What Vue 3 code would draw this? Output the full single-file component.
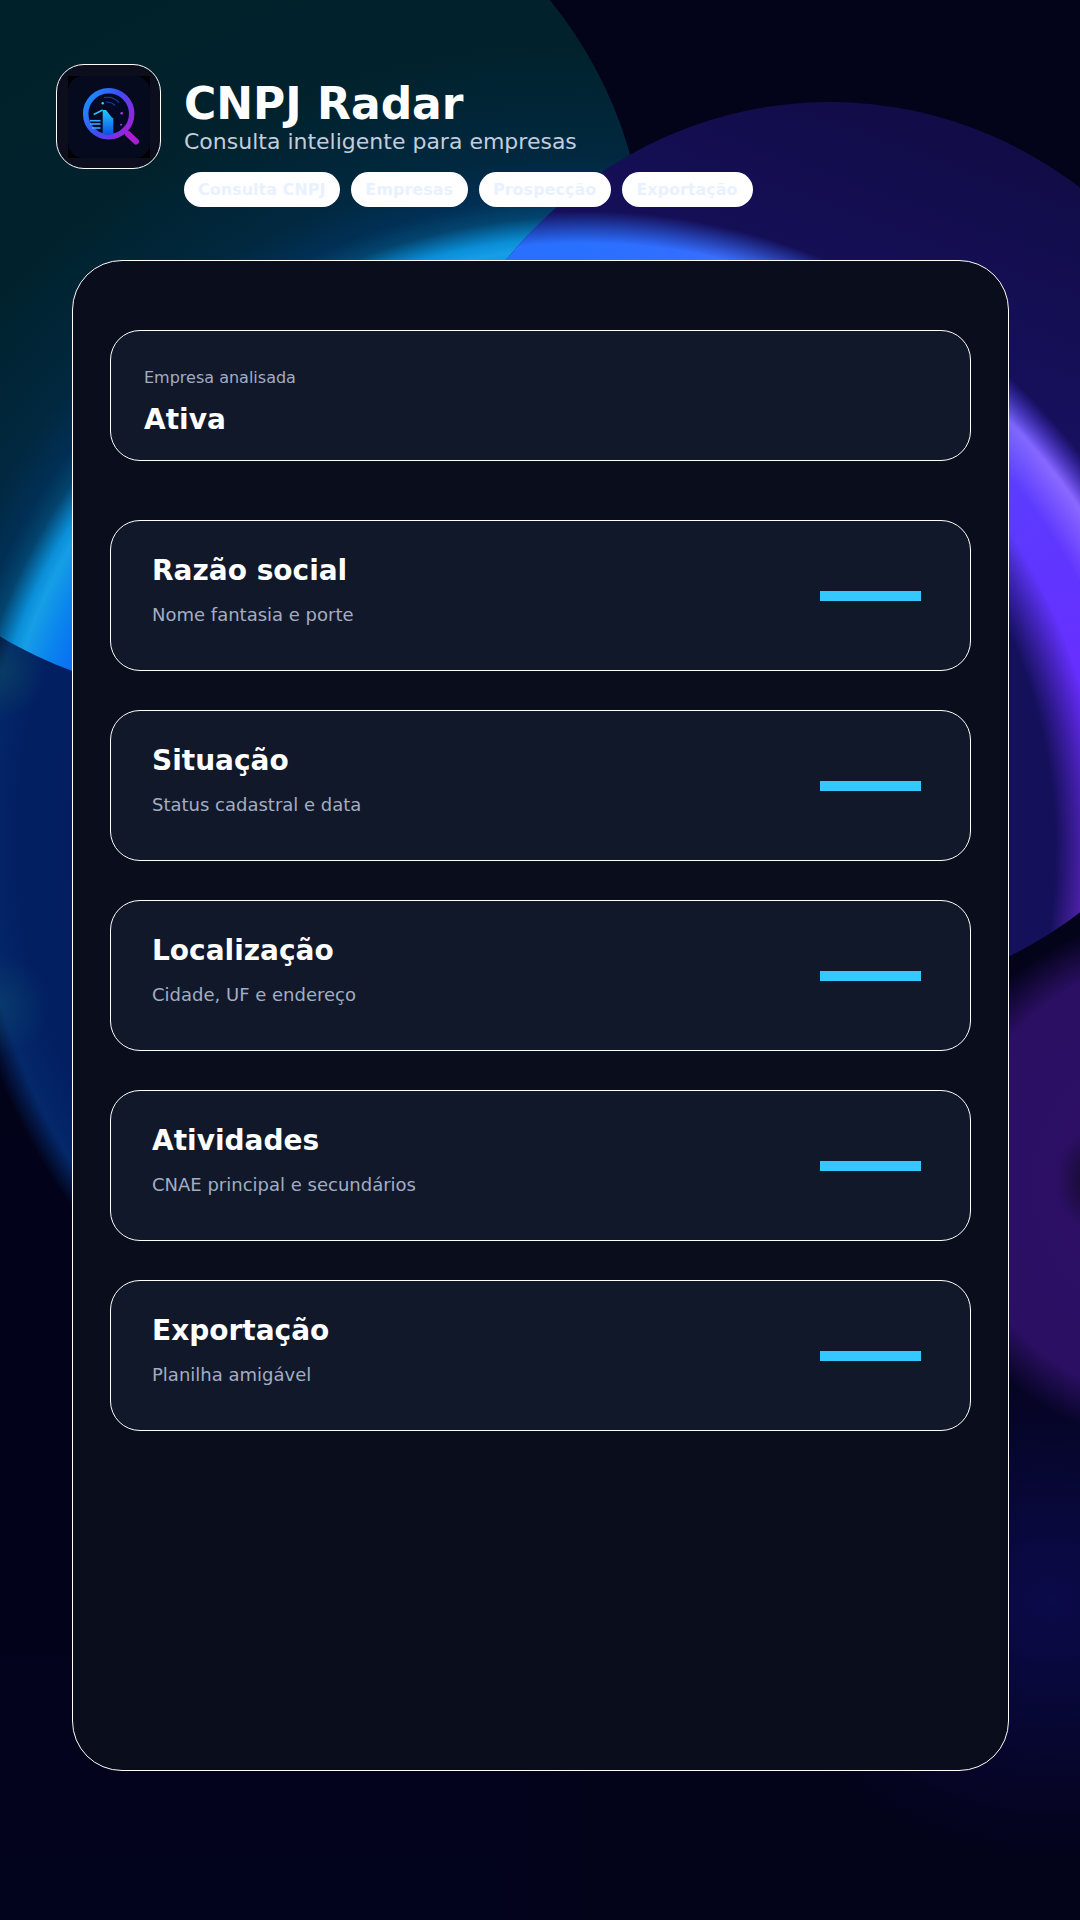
<template>
  <div class="page">
    <!-- background shapes -->
    <div class="bg">
      <div class="bg-low"></div>
      <div class="bg-teal"></div>
      <div class="bg-violet"><div class="bg-ring"></div></div>
    </div>

    <header class="head">
      <div class="logo">
        <svg class="logo-svg" viewBox="0 0 82 82" width="82" height="82">
          <defs>
            <linearGradient id="lens" x1="0" y1="0.2" x2="1" y2="0.8">
              <stop offset="0" stop-color="#1f8bff" />
              <stop offset="0.5" stop-color="#3f4cf5" />
              <stop offset="1" stop-color="#a11fd6" />
            </linearGradient>
            <linearGradient id="tower" x1="0" y1="0" x2="0" y2="1">
              <stop offset="0" stop-color="#22c8ff" />
              <stop offset="1" stop-color="#0a4fe0" />
            </linearGradient>
          </defs>
          <rect width="82" height="82" fill="#000" />
          <rect width="82" height="82" rx="15" fill="#050a1f" />
          <path d="M60 58l8 7.5" stroke="#a81fd0" stroke-width="6" stroke-linecap="round" />
          <circle cx="40.7" cy="37.7" r="23" fill="#030824" stroke="url(#lens)" stroke-width="5.5" />
          <g fill="none" stroke="#1c3f9a" stroke-width="1.2">
            <path d="M36 21.5a17 17 0 0 1 15 5" />
            <path d="M38 26a12 12 0 0 1 9 3.5" />
          </g>
          <path d="M34.7 34h3.3l5.7 7.3 1.6 1V58q-5 2-10.600 0z" fill="url(#tower)" />
          <path d="M25.7 38.500l9-4.500" stroke="#22c8ff" stroke-width="1.400" fill="none" />
          <g stroke="#37a8ff" stroke-width="1.600">
            <path d="M22 44.700h10.500" />
            <path d="M22 48h10.500" />
            <path d="M24 52h8.500" />
          </g>
          <circle cx="34.700" cy="27.300" r="1.200" fill="#27e0f5" />
          <circle cx="53.700" cy="37.300" r="1.300" fill="#a83ce0" />
          <circle cx="53" cy="48.700" r="1" fill="#a83ce0" />
        </svg>
      </div>
      <div class="head-text">
        <h1>CNPJ Radar</h1>
        <p class="tagline">Consulta inteligente para empresas</p>
        <div class="chips">
          <span v-for="c in chips" :key="c" class="chip">{{ c }}</span>
        </div>
      </div>
    </header>

    <main class="panel">
      <section class="summary">
        <div class="summary-label">Empresa analisada</div>
        <div class="summary-value">Ativa</div>
      </section>

      <div class="rows">
        <article v-for="r in rows" :key="r.title" class="row">
          <div class="row-text">
            <h2>{{ r.title }}</h2>
            <p>{{ r.sub }}</p>
          </div>
          <span class="bar"></span>
        </article>
      </div>
    </main>
  </div>
</template>

<script setup>
const chips = ['Consulta CNPJ', 'Empresas', 'Prospecção', 'Exportação']

const rows = [
  { title: 'Razão social', sub: 'Nome fantasia e porte' },
  { title: 'Situação', sub: 'Status cadastral e data' },
  { title: 'Localização', sub: 'Cidade, UF e endereço' },
  { title: 'Atividades', sub: 'CNAE principal e secundários' },
  { title: 'Exportação', sub: 'Planilha amigável' }
]
</script>

<style>
html, body {
  margin: 0;
  background: #02031a;
}
</style>

<style scoped>
.page {
  position: relative;
  width: 1080px;
  height: 1920px;
  overflow: hidden;
  font-family: "DejaVu Sans", sans-serif;
  color: #fff;
}

/* Background */
.bg {
  position: absolute;
  inset: 0;
  overflow: hidden;
  background: linear-gradient(180deg, #020316 0%, #02031c 100%);
}
.bg-low {
  position: absolute;
  inset: 0;
  background:
    radial-gradient(ellipse 36px 50px at 1092px 1180px, #120a26 0%, rgba(18, 10, 38, 0) 100%),
    radial-gradient(ellipse 290px 270px at 1200px 1180px, #2e1069 0%, #2a0f62 84%, rgba(42, 15, 98, 0) 100%),
    radial-gradient(ellipse 300px 260px at 1050px 1600px, #0b0a4a 0%, rgba(11, 10, 74, 0) 100%),
    linear-gradient(90deg, rgba(3, 3, 26, 0) 500px, #03031a 600px),
    radial-gradient(circle 46px at 0 672px, rgba(12, 74, 96, 0.6) 0%, rgba(12, 74, 96, 0) 100%),
    radial-gradient(circle 50px at 0 1005px, rgba(12, 74, 110, 0.5) 0%, rgba(12, 74, 110, 0) 100%),
    radial-gradient(circle 630px at 584px 841px, #021a5c 0%, #021f62 90%, #04286a 96%, rgba(4, 40, 106, 0) 100%);
}
.bg-teal {
  position: absolute;
  left: -208px;
  top: -157px;
  width: 854px;
  height: 854px;
  border-radius: 50%;
  background: radial-gradient(
    circle at 792px 998px,
    #0a6df2 0,
    #0a6df2 540px,
    #0a84ee 566px,
    #169ee6 592px,
    #0a8fd8 603px,
    #03446e 625px,
    #012f55 645px,
    #01283f 685px,
    #01222c 800px,
    #001f27 100%
  );
}
.bg-violet {
  position: absolute;
  left: 405px;
  top: 102px;
  width: 850px;
  height: 896px;
  border-radius: 50%;
  overflow: hidden;
  background: linear-gradient(200deg, #0e0b3c 0%, #17105f 35%, #14105a 100%);
}
.bg-ring {
  position: absolute;
  left: -471px;
  top: 89px;
  width: 1300px;
  height: 1300px;
  background:
    radial-gradient(circle at 591px 659px, #14105a 530px, rgba(20, 16, 90, 0) 580px),
    conic-gradient(#2a70ff 0deg, #3a6cff 20deg, #5a3cff 50deg, #6a2cff 75deg, #7a2de0 100deg, #7a2de0 180deg, #2a70ff 300deg, #2a70ff 360deg);
  -webkit-mask-image: radial-gradient(circle, #000 598px, transparent 630px);
  mask-image: radial-gradient(circle, #000 598px, transparent 630px);
}
/* lighter rim on the upper right of the ring */
.bg-ring::before {
  content: "";
  position: absolute;
  inset: 0;
  background: conic-gradient(
    rgba(200, 170, 255, 0) 8deg,
    rgba(200, 170, 255, 0.16) 28deg,
    rgba(200, 170, 255, 0.42) 52deg,
    rgba(200, 170, 255, 0.42) 68deg,
    rgba(200, 170, 255, 0) 85deg
  );
  -webkit-mask-image: radial-gradient(circle, transparent 558px, #000 596px, transparent 630px);
  mask-image: radial-gradient(circle, transparent 558px, #000 596px, transparent 630px);
}

/* Header */
.head {
  position: relative;
  display: flex;
  gap: 23px;
  padding: 64px 0 0 56px;
}
.logo {
  display: flex;
  align-items: center;
  justify-content: center;
  width: 103px;
  height: 103px;
  border: 1px solid #fff;
  border-radius: 28px;
  background: #0c0e1e;
}
.logo-svg {
  display: block;
}
.head-text {
  padding-top: 16px;
}
.head-text h1 {
  margin: 0;
  font-size: 44px;
  line-height: 48px;
  font-weight: 700;
}
.tagline {
  margin: 0;
  font-size: 22px;
  line-height: 27px;
  color: #c2cddd;
}
.chips {
  display: flex;
  gap: 11px;
  margin-top: 17px;
}
.chip {
  padding: 0 15px 0 14px;
  height: 35px;
  line-height: 35px;
  border-radius: 18px;
  background: #fff;
  color: #e9f1ff;
  font-size: 16px;
  font-weight: 700;
}

/* Panel */
.panel {
  position: relative;
  box-sizing: border-box;
  width: 937px;
  height: 1511px;
  margin: 53px 0 0 72px;
  padding: 69px 37px;
  border: 1px solid #fff;
  border-radius: 50px;
  background: #0a0d1b;
}
.summary {
  box-sizing: border-box;
  height: 131px;
  padding: 37px 33px;
  border: 1px solid #fff;
  border-radius: 30px;
  background: #111829;
}
.summary-label {
  font-size: 16px;
  line-height: 20px;
  color: #a3adc2;
}
.summary-value {
  margin-top: 15px;
  font-size: 28px;
  line-height: 34px;
  font-weight: 700;
}
.rows {
  display: flex;
  flex-direction: column;
  gap: 39px;
  margin-top: 59px;
}
.row {
  box-sizing: border-box;
  display: flex;
  align-items: center;
  justify-content: space-between;
  height: 151px;
  padding: 0 49px 0 41px;
  border: 1px solid #fff;
  border-radius: 30px;
  background: #111829;
}
.row-text {
  padding-bottom: 12px;
}
.row h2 {
  margin: 0;
  font-size: 28px;
  line-height: 34px;
  font-weight: 700;
}
.row p {
  margin: 16px 0 0;
  font-size: 18px;
  line-height: 22px;
  color: #a3adc2;
}
.bar {
  width: 101px;
  height: 10px;
  background: #35c8ff;
}
</style>
